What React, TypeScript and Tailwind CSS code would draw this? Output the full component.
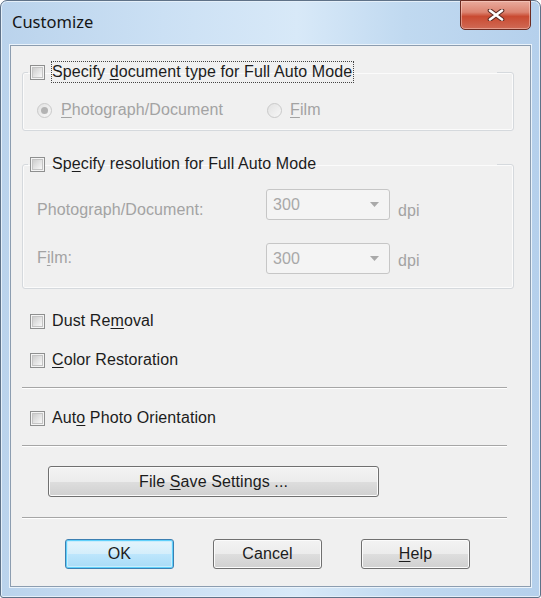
import type { ReactNode } from "react"

const Check = () => (
  <span className="flex h-[15px] w-[15px] shrink-0 items-center justify-center border border-[#8e8f8f] bg-[#f4f4f4]">
    <span className="h-[11px] w-[11px] border border-[#c4c4c4] bg-gradient-to-br from-[#cdcdcd] to-[#f8f8f8]" />
  </span>
)

const Radio = ({ checked = false }: { checked?: boolean }) => (
  <span className="flex h-[15px] w-[15px] shrink-0 items-center justify-center rounded-full border border-[#c9c9c9] bg-gradient-to-br from-[#e2e2e2] to-[#f7f7f7]">
    {checked && <span className="h-[7px] w-[7px] rounded-full bg-[#b3b3b3]" />}
  </span>
)

const Combo = () => (
  <div className="flex h-[31px] w-[124px] items-center justify-between rounded-[3px] border border-[#c6c6c6] bg-[#f4f4f4] pl-[6px] pr-[10px] text-[#a8a8a8]">
    <span>300</span>
    <svg width="9" height="5" viewBox="0 0 9 5">
      <path d="M0 0 L9 0 L4.5 5 Z" fill="#a9a9a9" />
    </svg>
  </div>
)

const Sep = ({ className }: { className: string }) => (
  <div className={`h-[2px] w-[485px] border-t border-b border-t-[#a6a6a6] border-b-white ${className}`} />
)

const Button = ({ children, primary = false, className }: { children: ReactNode; primary?: boolean; className: string }) => (
  <div
    className={`flex items-center justify-center rounded-[3px] border text-[#1c1c1c] ${
      primary
        ? "border-[#3c7fb1] bg-[linear-gradient(to_bottom,#e5f4fc_0%,#d4eefb_50%,#bde6fd_50%,#a9dbf6_100%)] shadow-[inset_0_0_0_1px_#5fd0fb,inset_0_0_0_2px_#c9edfc]"
        : "border-[#707070] bg-[linear-gradient(to_bottom,#f3f3f3_0%,#ececec_50%,#dedede_50%,#d0d0d0_100%)] shadow-[inset_0_0_0_1px_#fbfbfb]"
    } ${className}`}
  >
    {children}
  </div>
)

const CloseButton = () => (
  <div className="-mt-px mr-[9px] flex h-[30px] w-[71px] items-center justify-center rounded-b-[5px] border border-[#6d2c22] bg-[linear-gradient(to_bottom,#e9ab9d_0%,#dc8471_40%,#c94a31_55%,#d06a55_100%)] shadow-[inset_0_0_0_1px_rgba(255,220,210,0.45)]">
    <svg width="18" height="12" viewBox="0 0 18 12">
      <path d="M3 1.5 L15 10.5 M15 1.5 L3 10.5" stroke="#5c2a22" strokeWidth="4.6" strokeLinecap="round" />
      <path d="M3 1.5 L15 10.5 M15 1.5 L3 10.5" stroke="#ffffff" strokeWidth="2.6" strokeLinecap="round" />
    </svg>
  </div>
)

export default function App() {
  return (
    <div className="h-[598px] w-[541px] bg-white font-['Liberation_Sans',Arial,sans-serif] text-[16px] leading-[20px] tracking-[0.1px] text-[#1c1c1c]">
      <div className="flex h-[598px] w-[541px] flex-col rounded-t-[7px] rounded-b-[3px] border border-[#5f7288] bg-[linear-gradient(90deg,#bad3ec_0%,#cbe0f4_30%,#d8e9f8_55%,#c0d9f0_75%,#b5d0ec_100%)] shadow-[inset_0_0_0_1px_#e4eff9]">
        <div className="flex h-[44px] items-start justify-between">
          <span className="ml-[11px] mt-[11px] font-['Noto_Sans',sans-serif] text-[16.5px] tracking-normal text-[#151515]">Customize</span>
          <CloseButton />
        </div>

        <div className="ml-[9px] flex h-[542px] w-[521px] flex-col border border-[#8c9db0] bg-[#f0f0f0] pl-[11px] shadow-[0_0_0_1px_#eaf3fb]">
          <fieldset className="mt-[16px] w-[492px] rounded-[3px] border border-[#d5d9dd] pb-[10px] shadow-[inset_0_0_0_1px_#fbfbfb]">
            <legend className="ml-[5px] w-[469px] pl-[2px]">
              <div className="flex h-[20px] items-center gap-[6px]">
                <Check />
                <span className="border border-dotted border-[#444] pr-px">
                  Specify <u className="underline-offset-2">d</u>ocument type for Full Auto Mode
                </span>
              </div>
            </legend>
            <div className="ml-[14px] mt-[18px] flex h-[20px] items-center text-[#a3a3a3]">
              <div className="flex w-[230px] items-center gap-[9px]">
                <Radio checked />
                <span>
                  <u className="underline-offset-2">P</u>hotograph/Document
                </span>
              </div>
              <div className="flex items-center gap-[8px]">
                <Radio />
                <span>
                  <u className="underline-offset-2">F</u>ilm
                </span>
              </div>
            </div>
          </fieldset>

          <fieldset className="mt-[23px] w-[492px] rounded-[3px] border border-[#d5d9dd] pb-[14px] shadow-[inset_0_0_0_1px_#fbfbfb]">
            <legend className="ml-[5px] w-[469px] pl-[2px]">
              <div className="flex h-[20px] items-center gap-[6px]">
                <Check />
                <span className="border border-transparent">
                  Sp<u className="underline-offset-2">e</u>cify resolution for Full Auto Mode
                </span>
              </div>
            </legend>
            <div className="ml-[14px] mt-[15px] flex h-[31px] items-start text-[#a3a3a3]">
              <span className="w-[229px] pt-[11px]">
                Photo<u className="underline-offset-2">g</u>raph/Document:
              </span>
              <Combo />
              <span className="ml-[8px] pt-[12px]">dpi</span>
            </div>
            <div className="ml-[14px] mt-[23px] flex h-[31px] items-start text-[#a3a3a3]">
              <span className="w-[229px] pt-[5px]">
                F<u className="underline-offset-2">i</u>lm:
              </span>
              <Combo />
              <span className="ml-[8px] pt-[8px]">dpi</span>
            </div>
          </fieldset>

          <div className="ml-[8px] mt-[22px] flex h-[20px] items-center gap-[7px]">
            <Check />
            <span>
              Dust Re<u className="underline-offset-2">m</u>oval
            </span>
          </div>
          <div className="ml-[8px] mt-[19px] flex h-[20px] items-center gap-[7px]">
            <Check />
            <span>
              <u className="underline-offset-2">C</u>olor Restoration
            </span>
          </div>
          <Sep className="mt-[17px]" />
          <div className="ml-[8px] mt-[19px] flex h-[20px] items-center gap-[7px]">
            <Check />
            <span>
              Aut<u className="underline-offset-2">o</u> Photo Orientation
            </span>
          </div>
          <Sep className="mt-[17px]" />
          <Button className="ml-[26px] mt-[19px] h-[31px] w-[331px]">
            <span>
              File <u className="underline-offset-2">S</u>ave Settings ...
            </span>
          </Button>
          <Sep className="mt-[20px]" />
          <div className="ml-[43px] mt-[20px] flex gap-[39px]">
            <Button primary className="h-[30px] w-[109px]">
              OK
            </Button>
            <Button className="h-[30px] w-[109px]">Cancel</Button>
            <Button className="h-[30px] w-[109px]">
              <span>
                <u className="underline-offset-2">H</u>elp
              </span>
            </Button>
          </div>
        </div>
      </div>
    </div>
  )
}
